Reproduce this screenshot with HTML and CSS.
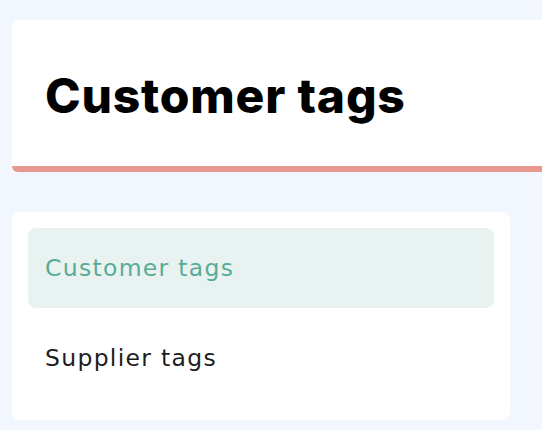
FILE: index.html
```html
<!DOCTYPE html>
<html>
<head>
<meta charset="utf-8">
<link rel="stylesheet" href="styles.css">
</head>
<body>
<div class="page">
  <header class="header-card">
    <h1 class="title">Customer tags</h1>
  </header>
  <nav class="nav-card">
    <a class="nav-item active">Customer tags</a>
    <a class="nav-item">Supplier tags</a>
  </nav>
</div>
</body>
</html>
```
FILE: styles.css
```css
html, body {
  margin: 0;
  padding: 0;
  background: #f2f6fe;
}
.page {
  padding: 20px 0 0 12px;
  display: flex;
  flex-direction: column;
  gap: 40px;
}
.header-card {
  background: #fff;
  border-bottom: 6px solid #e8998f;
  border-radius: 6px 0 0 6px;
  display: flex;
  align-items: center;
  padding-left: 33px;
  padding-top: 4px;
  box-sizing: border-box;
  height: 152px;
}
.title {
  margin: 0;
  font-family: "Inter", sans-serif;
  font-weight: 800;
  font-size: 48px;
  color: #000;
  letter-spacing: 0.8px;
}
.nav-card {
  width: 466px;
  background: #fff;
  border-radius: 8px;
  padding: 16px 16px 22px 16px;
  display: flex;
  flex-direction: column;
  gap: 10px;
}
.nav-item {
  height: 80px;
  display: flex;
  align-items: center;
  padding-left: 17px;
  border-radius: 8px;
  font-family: "DejaVu Sans", sans-serif;
  font-size: 23.5px;
  letter-spacing: 1.3px;
  color: #1d1d1f;
}
.nav-item.active {
  background: #e8f3f1;
  color: #5aab96;
}
```
